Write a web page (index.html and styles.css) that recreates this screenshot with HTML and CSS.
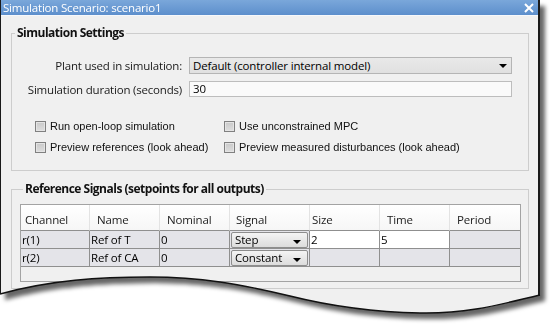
FILE: index.html
```html
<!DOCTYPE html>
<html lang="en">
<head>
  <meta charset="UTF-8" />
  <title>Simulation Scenario: scenario1</title>
  <link rel="stylesheet" href="styles.css">
</head>
<body>

  <div class="frame">
    <div class="shadow">
      <div class="window">
        <div class="titlebar">
          <span class="title">Simulation Scenario: scenario1</span>
          <svg class="close" width="10" height="10" viewBox="0 0 10 10">
            <path d="M1 1L9 9M9 1L1 9" stroke="#fff" stroke-width="2" />
          </svg>
        </div>

        <div class="content">
          <fieldset class="group settings">
            <legend>Simulation Settings</legend>

            <div class="fields">
              <label class="field-label">Plant used in simulation:</label>
              <div class="combo">Default (controller internal model)<span class="arrow"></span></div>
              <label class="field-label">Simulation duration (seconds)</label>
              <div class="text-input">30</div>
            </div>

            <div class="options">
              <label class="option"><span class="check"></span>Run open-loop simulation</label>
              <label class="option"><span class="check"></span>Use unconstrained MPC</label>
              <label class="option"><span class="check"></span>Preview references (look ahead)</label>
              <label class="option"><span class="check"></span>Preview measured disturbances (look ahead)</label>
            </div>
          </fieldset>

          <fieldset class="group signals">
            <legend>Reference Signals (setpoints for all outputs)</legend>

            <div class="grid">
              <table>
                <thead>
                  <tr>
                    <th class="c-channel">Channel</th>
                    <th>Name</th>
                    <th>Nominal</th>
                    <th class="c-signal">Signal</th>
                    <th class="c-size">Size</th>
                    <th>Time</th>
                    <th class="c-last">Period</th>
                  </tr>
                </thead>
                <tbody>
                  <tr>
                    <td>r(1)</td>
                    <td>Ref of T</td>
                    <td>0</td>
                    <td class="signal"><div class="cell-combo">Step<span class="arrow"></span></div></td>
                    <td class="edit">2</td>
                    <td class="edit">5</td>
                    <td class="c-last"></td>
                  </tr>
                  <tr>
                    <td>r(2)</td>
                    <td>Ref of CA</td>
                    <td>0</td>
                    <td class="signal"><div class="cell-combo">Constant<span class="arrow"></span></div></td>
                    <td></td>
                    <td></td>
                    <td class="c-last"></td>
                  </tr>
                </tbody>
              </table>
            </div>
          </fieldset>
        </div>
      </div>
    </div>

    <!-- dark line along the torn bottom edge -->
    <svg class="tear" width="555" height="329" viewBox="0 0 555 329">
      <path d="M540 295 C505 303 470 314 420 313 C370 312 330 306 290 296 C240 284 200 277 150 277 C100 277 50 280 0 294"
            fill="none" stroke="#111" stroke-width="1.4" />
    </svg>
  </div>

</body>
</html>
```

FILE: styles.css
```css
body {
  margin: 0;
  background-color: #fff;
  font-family: "Open Sans", Arial, sans-serif;
  font-size: 11.5px;
  letter-spacing: -0.15px;
  color: #000;
}

.frame {
  position: relative;
  width: 555px;
  height: 329px;
  overflow: hidden;
}

.shadow {
  filter: drop-shadow(5px 6px 2px rgba(0, 0, 0, 0.6));
}

.window {
  width: 540px;
  height: 329px;
  box-sizing: border-box;
  background-color: #f0f0f0;
  border-left: 1px solid #1a1a1a;
  border-right: 2px solid #1a1a1a;
  clip-path: path("M0 0 H540 V295 C505 303 470 314 420 313 C370 312 330 306 290 296 C240 284 200 277 150 277 C100 277 50 280 0 294 Z");
}

.titlebar {
  display: flex;
  justify-content: space-between;
  align-items: center;
  height: 15px;
  padding: 0 4px 0 2px;
  background: linear-gradient(to bottom, #7aa7da, #5d8fcc);
  border-bottom: 1px solid #f6f8fb;
  color: #fff;
  font-size: 11.5px;
  letter-spacing: -0.2px;
}

.title {
  line-height: 15px;
}

.content {
  padding: 9px 9px 0 10px;
}

.group {
  margin: 0;
  padding: 0;
  border: 1px solid #cdcdcd;
}

.group legend {
  margin-left: 3px;
  padding: 0 2px;
  font-weight: bold;
  font-size: 12px;
  line-height: 16px;
  letter-spacing: -0.5px;
  color: #111;
}

.fields {
  display: grid;
  grid-template-columns: 170px 323px;
  column-gap: 7px;
  row-gap: 7px;
  padding-top: 16px;
}

.field-label {
  text-align: right;
  line-height: 17px;
  letter-spacing: -0.2px;
  color: #1a1a1a;
}

.combo {
  position: relative;
  height: 17px;
  box-sizing: border-box;
  padding-left: 3px;
  line-height: 15px;
  background: linear-gradient(to bottom, #e9e9e9, #e0e0e0);
  border: 1px solid #b5b5b5;
}

.combo .arrow {
  position: absolute;
  right: 4px;
  top: 6px;
}

.arrow {
  width: 0;
  height: 0;
  border-left: 4px solid transparent;
  border-right: 4px solid transparent;
  border-top: 4px solid #000;
}

.text-input {
  height: 16px;
  box-sizing: border-box;
  padding-left: 3px;
  line-height: 14px;
  background-color: #fafafa;
  border: 1px solid #bdbdbd;
}

.options {
  display: grid;
  grid-template-columns: 189px auto;
  row-gap: 7px;
  padding: 21px 0 16px 23px;
  font-family: "Liberation Sans", Arial, sans-serif;
  font-size: 11px;
  letter-spacing: 0;
}

.option {
  display: flex;
  align-items: center;
  height: 14px;
  color: #111;
}

.check {
  width: 11px;
  height: 11px;
  box-sizing: border-box;
  margin-right: 4px;
  border: 1px solid #808080;
  background: linear-gradient(to bottom, #c9c9c9, #dedede);
  box-shadow: inset 0 0 0 1px #e4e4e4;
}

.signals {
  margin-top: 10px;
  padding: 7px 7px 6px 8px;
}

.grid {
  height: 78px;
  box-sizing: border-box;
  border: 1px solid #a3a3a3;
  background-color: #f0f0f0;
}

table {
  width: 499px;
  table-layout: fixed;
  border-collapse: separate;
  border-spacing: 0;
}

th, td {
  box-sizing: border-box;
  width: 70px;
  text-align: left;
  font-weight: normal;
  white-space: nowrap;
  overflow: hidden;
}

th {
  height: 26px;
  padding: 0 0 3px 7px;
  vertical-align: bottom;
  background: linear-gradient(to bottom, #ffffff, #f6f6f6);
  border-right: 1px solid #e3e3e3;
  border-bottom: 1px solid #8f8f8f;
  color: #222;
}

th.c-channel {
  width: 69px;
  padding-left: 4px;
}

th.c-signal {
  width: 80px;
  padding-left: 6px;
}

th.c-size {
  padding-left: 2px;
}

td {
  height: 18px;
  padding: 0 0 0 1px;
  line-height: 16px;
  background-color: #e4e4e9;
  border-right: 1px solid #8f8f8f;
  border-bottom: 1px solid #8f8f8f;
}

td.edit {
  background-color: #fff;
}

th.c-last, td.c-last {
  border-right: none;
}

td.signal {
  padding: 0 1px;
}

.cell-combo {
  display: flex;
  justify-content: space-between;
  align-items: center;
  height: 16px;
  box-sizing: border-box;
  padding: 0 6px 0 3px;
  background: linear-gradient(to bottom, #f4f4f4, #dcdcdc);
  border: 1px solid #8d8d8d;
  border-radius: 2px;
}

.cell-combo .arrow {
  margin-top: 4px;
}

.tear {
  position: absolute;
  left: 0;
  top: 0;
  pointer-events: none;
}
```
